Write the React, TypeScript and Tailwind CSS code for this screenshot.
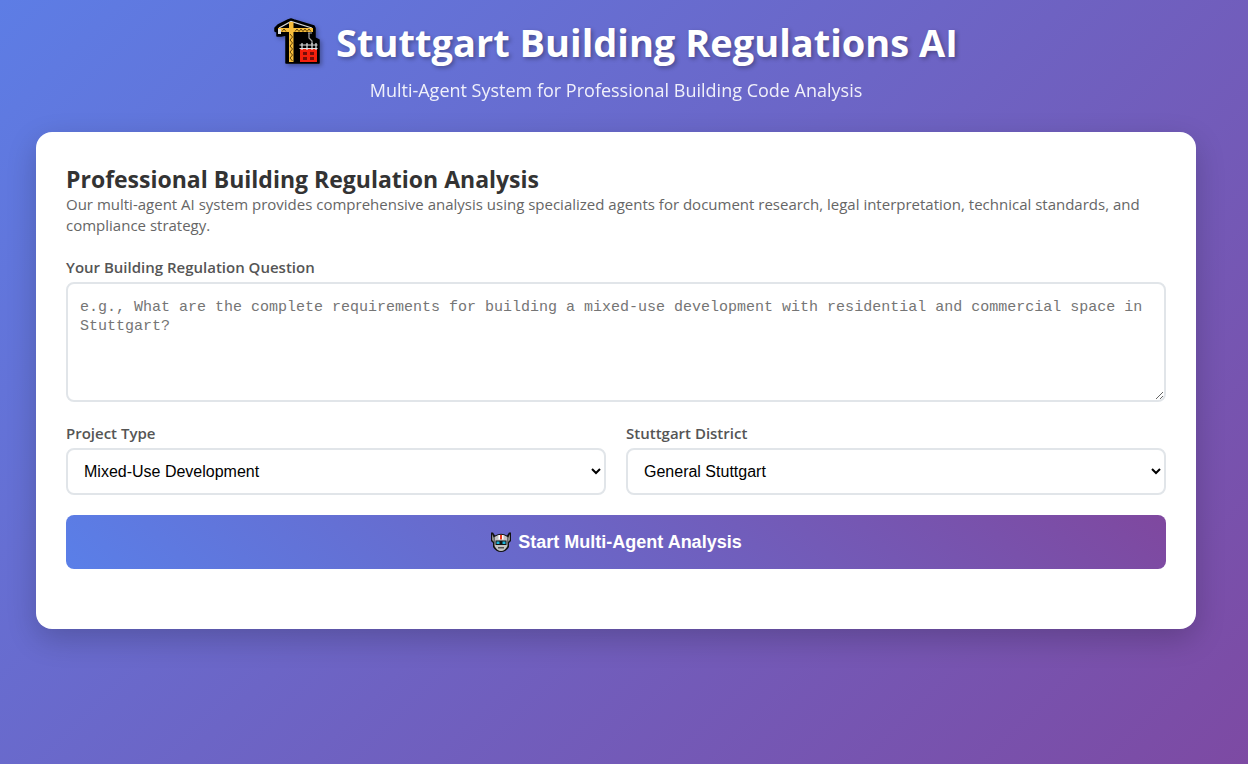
import { useState } from "react";

function CraneIcon() {
  return (
    <svg
      viewBox="0 0 48 48"
      className="h-12 w-12 shrink-0 drop-shadow-[2px_2px_2px_rgba(0,0,0,0.3)]"
      aria-hidden="true"
    >
      <path
        d="M1 10 L4 7 L14 2 L17 1 L20 2 L40 8 L41 10 V20 L45 22 V45 H12 V17 L7 18 H3 V14 L1 13 Z"
        fill="#000"
        stroke="#000"
        strokeWidth="1.5"
        strokeLinejoin="round"
      />
      <path d="M5 10 L17 3.500 L38 10" fill="none" stroke="#d8d8d8" strokeWidth="1.3" />
      <path d="M4 10 H39 V14 H4 Z M15 4 H19.500 V44 H15 Z" fill="#f7bd3c" />
      <path d="M4 11 H7 V16 H4 Z" fill="#e0e0e0" />
      <path
        d="M8 13.500 L10 11 L12 13.500 M21 13.500 L23 11 L25 13.500 L27 11 L29 13.500 L31 11 L33 13.500 L35 11 L37 13.500 M16 16 L18.500 19 L16 22 L18.500 25 L16 28 L18.500 31 L16 34 L18.500 37 L16 40 L18.500 43"
        fill="none"
        stroke="#4f3706"
        strokeWidth="0.9"
      />
      <path d="M35 15 V20 L38 23 V26 M34 15 H38" fill="none" stroke="#aaa" strokeWidth="1.2" />
      <path d="M26 31 H43 V44 H26 Z" fill="#f5200c" />
      <path
        d="M29 34 H33 V37 H29 Z M36 34 H40 V37 H36 Z M29 39 H33 V42 H29 Z M36 39 H40 V42 H36 Z"
        fill="#760d08"
      />
      <path
        d="M25.500 27 H43.500 M25.500 30.500 H43.500 M28 25 V32 M33 25 V32 M38 25 V32 M42 25 V32"
        fill="none"
        stroke="#e2e2e2"
        strokeWidth="1.2"
      />
    </svg>
  );
}

function RobotIcon() {
  return (
    <svg viewBox="0 0 22 22" className="h-[22px] w-[22px] shrink-0" aria-hidden="true">
      <path
        d="M1 1.500 H3 L5 4.500 Q11 1 17 4.500 L19 1.500 H21 V10 L19 12 V16 Q16 21 11 21 Q6 21 3 16 V12 L1 10 Z"
        fill="#111"
      />
      <path d="M2 3 L4 7 V11 L2 9 Z M20 3 L18 7 V11 L20 9 Z" fill="#8a8a8a" />
      <path d="M4.500 6 Q11 1.500 17.500 6 V15 Q15 20 11 20 Q7 20 4.500 15 Z" fill="#c4c4c4" />
      <path d="M8.500 4 H13.500 V8.500 H8.500 Z" fill="#fff" />
      <path d="M10 4 H12 V8.500 H10 Z" fill="#e8361c" />
      <path d="M5.500 9.500 H16.500 V14 H5.500 Z" fill="#111" />
      <path d="M6.500 10.500 H9.500 V13 H6.500 Z M12.500 10.500 H15.500 V13 H12.500 Z" fill="#1bb5dc" />
      <path d="M8 16 H14 V17.500 H8 Z" fill="#555" />
    </svg>
  );
}

const projectTypes = [
  "Mixed-Use Development",
  "Residential Building",
  "Commercial Building",
  "Industrial Building",
];

const districts = ["General Stuttgart", "Stuttgart-Mitte", "Stuttgart-West", "Bad Cannstatt"];

type SelectFieldProps = { id: string; label: string; options: string[] };

function SelectField({ id, label, options }: SelectFieldProps) {
  return (
    <div className="flex flex-col gap-1">
      <label htmlFor={id} className="text-[15px] leading-[22px] font-semibold text-[#555]">
        {label}
      </label>
      <select
        id={id}
        className="h-[47px] w-full rounded-lg border-2 border-[#e1e5e9] bg-white px-3 font-['Liberation_Sans',Arial,sans-serif] text-base text-black"
      >
        {options.map((option) => (
          <option key={option}>{option}</option>
        ))}
      </select>
    </div>
  );
}

export default function App() {
  const [question, setQuestion] = useState("");

  return (
    <div className="min-h-screen bg-[linear-gradient(135deg,#5d7de5_0%,#7d4aa3_100%)] pt-4 pr-13 pb-5 pl-9 font-['Open_Sans','Noto_Sans',sans-serif]">
      <div className="mx-auto max-w-[1160px]">
        <header className="text-center text-white">
          <h1 className="flex items-center justify-center gap-3.5 text-[38px] leading-[52px] font-bold [text-shadow:2px_2px_4px_rgba(0,0,0,0.3)]">
            <CraneIcon />
            Stuttgart Building Regulations AI
          </h1>
          <p className="mt-2 text-lg leading-7 opacity-90">
            Multi-Agent System for Professional Building Code Analysis
          </p>
        </header>

        <main className="mt-7 rounded-2xl bg-white px-[30px] pt-[34px] pb-[60px] shadow-[0_10px_30px_rgba(0,0,0,0.2)]">
          <h2 className="text-[23px] leading-[26px] font-bold text-[#333]">
            Professional Building Regulation Analysis
          </h2>
          <p className="mt-[2px] text-[15px] leading-[21px] text-[#666]">
            Our multi-agent AI system provides comprehensive analysis using specialized agents for
            document research, legal interpretation, technical standards, and compliance strategy.
          </p>

          <form className="mt-5 flex flex-col gap-5" onSubmit={(event) => event.preventDefault()}>
            <div className="flex flex-col gap-1">
              <label
                htmlFor="question"
                className="text-[15px] leading-[22px] font-semibold text-[#555]"
              >
                Your Building Regulation Question
              </label>
              <textarea
                id="question"
                value={question}
                onChange={(event) => setQuestion(event.target.value)}
                placeholder="e.g., What are the complete requirements for building a mixed-use development with residential and commercial space in Stuttgart?"
                className="h-[120px] w-full resize-y rounded-lg border-2 border-[#e1e5e9] bg-white px-3 py-3.5 font-['Liberation_Mono',monospace] text-[15px] leading-[19px] text-black placeholder:text-[#757575]"
              />
            </div>

            <div className="grid grid-cols-2 gap-5">
              <SelectField id="project-type" label="Project Type" options={projectTypes} />
              <SelectField id="district" label="Stuttgart District" options={districts} />
            </div>

            <button
              type="submit"
              className="flex h-[54px] w-full items-center justify-center gap-[6px] rounded-lg bg-[linear-gradient(45deg,#5a7fe8_0%,#7f489f_100%)] font-['Liberation_Sans',Arial,sans-serif] text-lg font-bold text-white"
            >
              <RobotIcon />
              Start Multi-Agent Analysis
            </button>
          </form>
        </main>
      </div>
    </div>
  );
}
